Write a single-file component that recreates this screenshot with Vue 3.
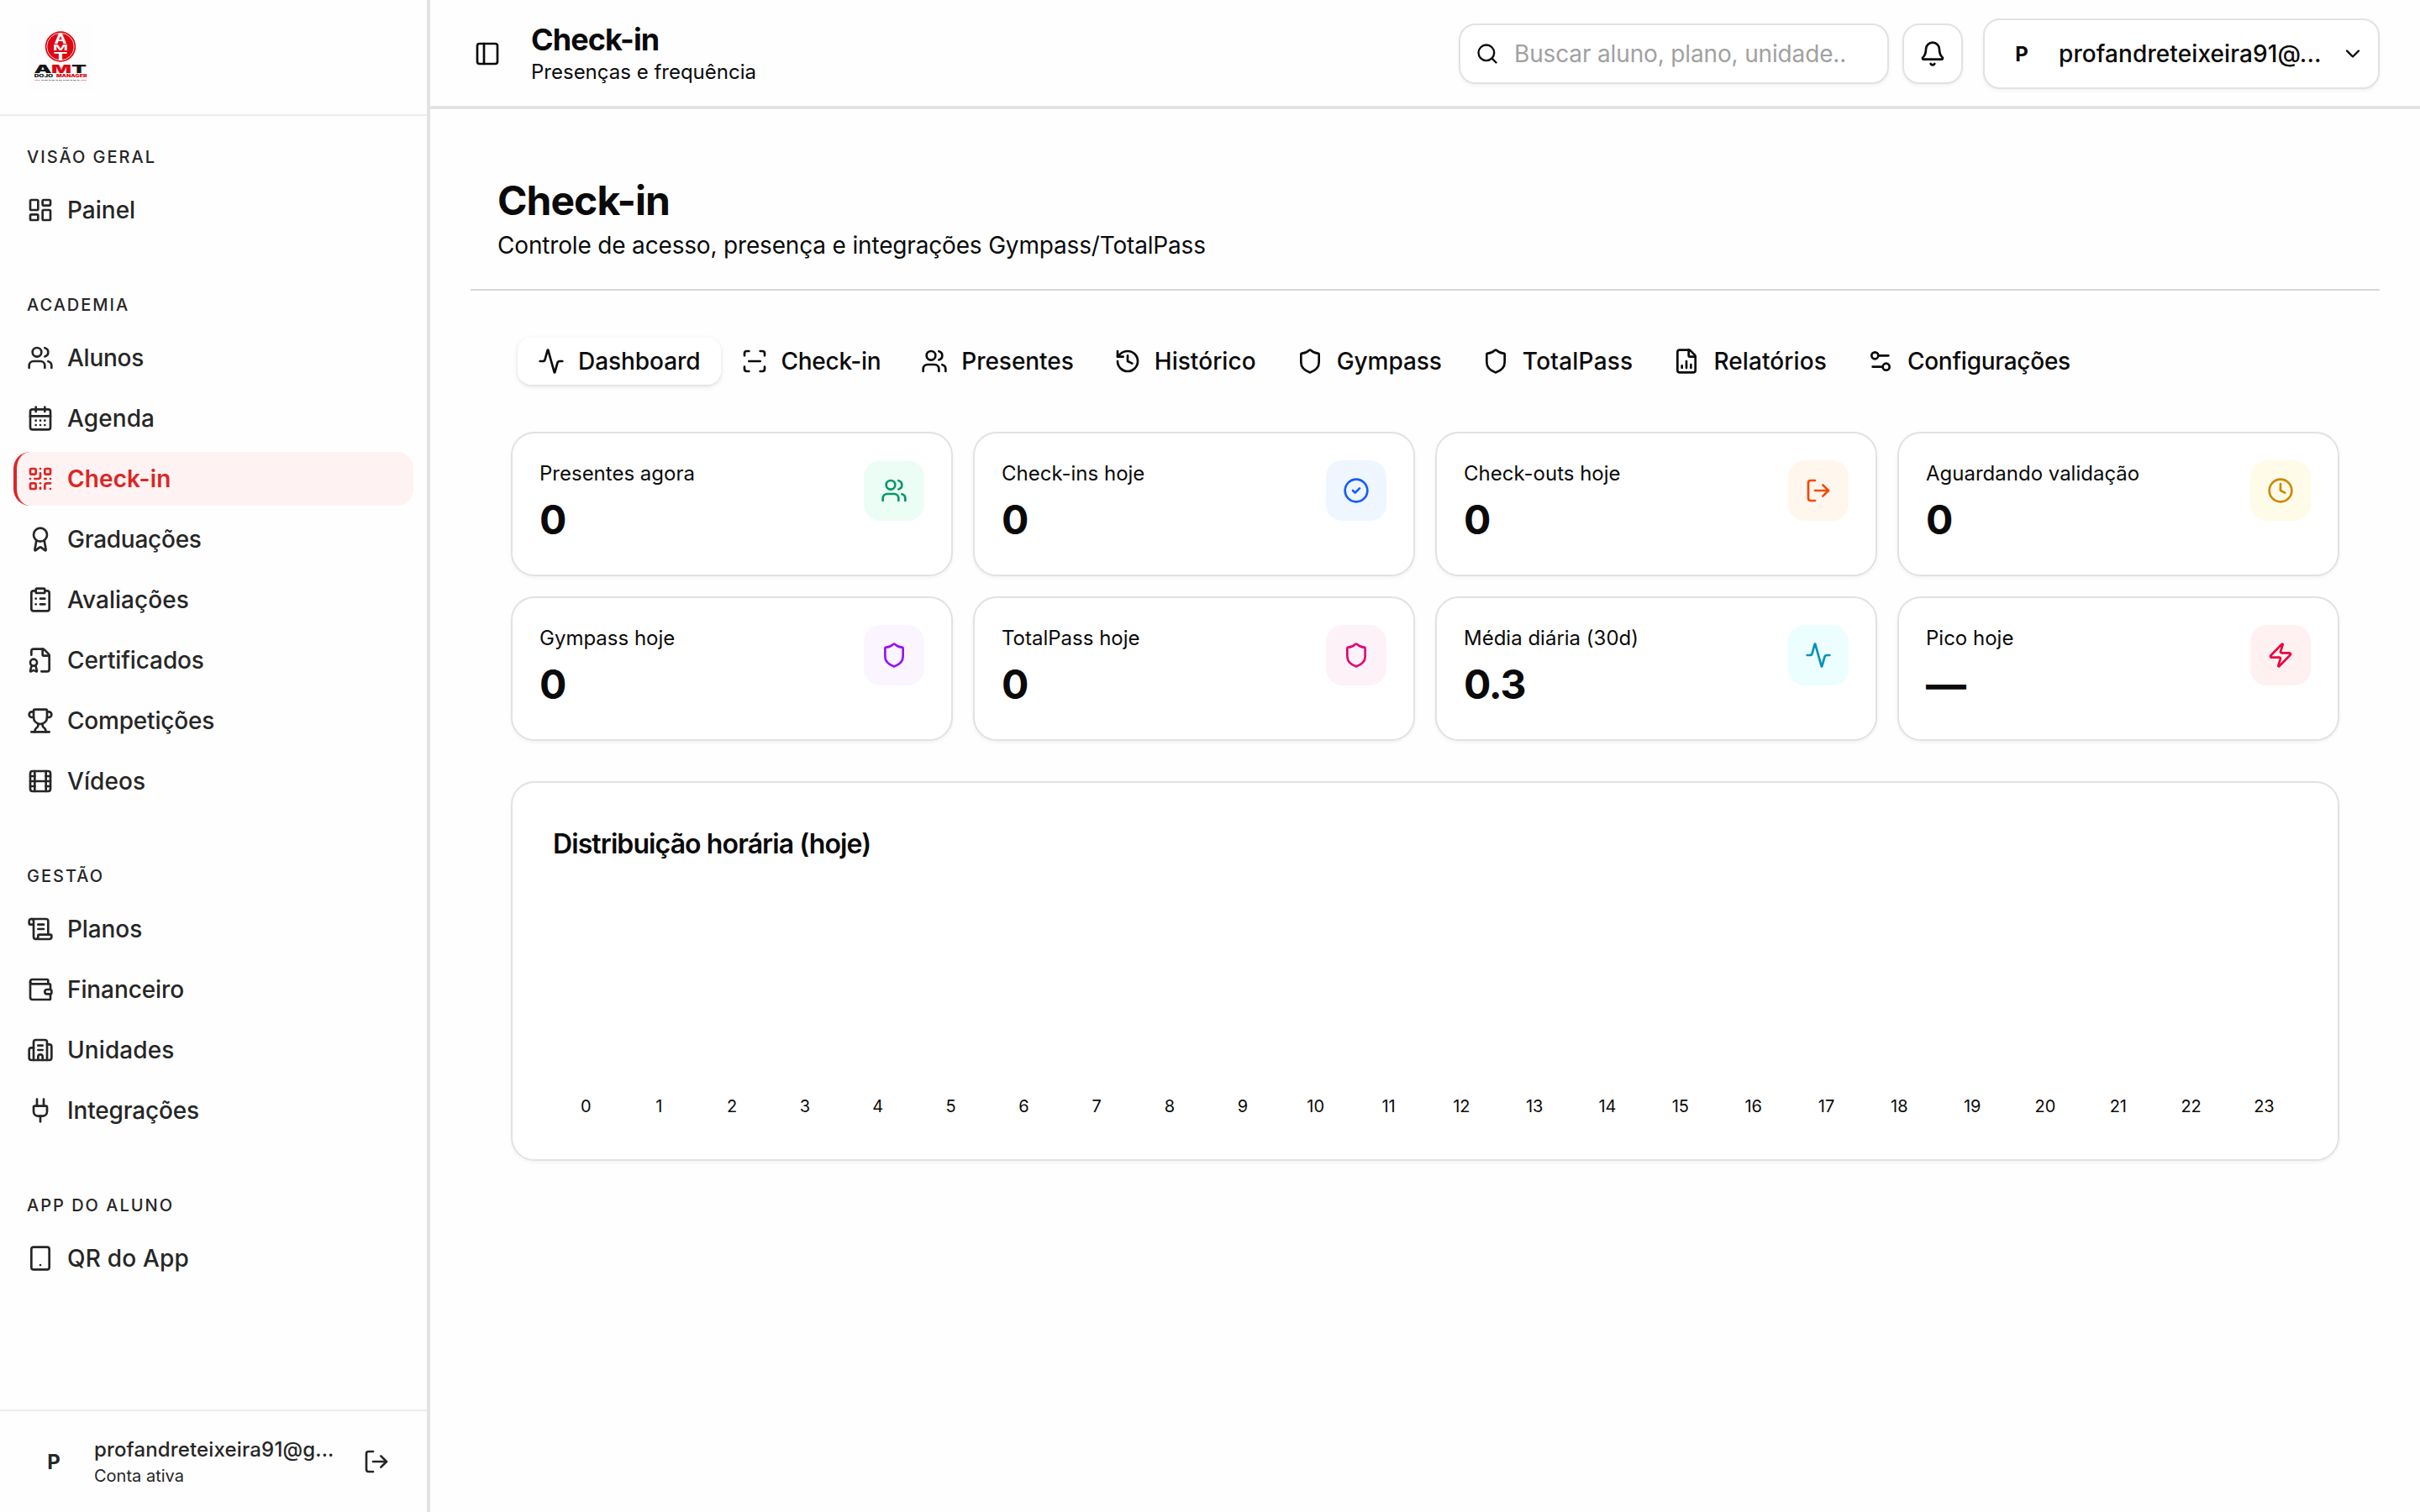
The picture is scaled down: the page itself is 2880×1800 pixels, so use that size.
<script setup>
import { ref } from 'vue';

// Icon shapes on a 24x24 grid
const icons = {
    dashboard: '<rect width="7" height="9" x="3" y="3" rx="1"/><rect width="7" height="5" x="14" y="3" rx="1"/><rect width="7" height="9" x="14" y="12" rx="1"/><rect width="7" height="5" x="3" y="16" rx="1"/>',
    users: '<path d="M16 21v-2a4 4 0 0 0-4-4H6a4 4 0 0 0-4 4v2"/><path d="M16 3.128a4 4 0 0 1 0 7.744"/><path d="M22 21v-2a4 4 0 0 0-3-3.87"/><circle cx="9" cy="7" r="4"/>',
    calendar: '<path d="M8 2v4"/><path d="M16 2v4"/><rect width="18" height="18" x="3" y="4" rx="2"/><path d="M3 10h18"/><path d="M8 14h.01"/><path d="M12 14h.01"/><path d="M16 14h.01"/><path d="M8 18h.01"/><path d="M12 18h.01"/><path d="M16 18h.01"/>',
    qr: '<rect width="5" height="5" x="3" y="3" rx="1"/><rect width="5" height="5" x="16" y="3" rx="1"/><rect width="5" height="5" x="3" y="16" rx="1"/><path d="M21 16h-3a2 2 0 0 0-2 2v3"/><path d="M21 21v.01"/><path d="M12 7v3a2 2 0 0 1-2 2H7"/><path d="M3 12h.01"/><path d="M12 3h.01"/><path d="M12 16v.01"/><path d="M16 12h1"/><path d="M21 12v.01"/><path d="M12 21v-1"/>',
    award: '<path d="m15.477 12.89 1.515 8.526a.5.5 0 0 1-.81.47l-3.58-2.687a1 1 0 0 0-1.197 0l-3.586 2.686a.5.5 0 0 1-.81-.469l1.514-8.526"/><circle cx="12" cy="8" r="6"/>',
    clipboard: '<rect width="8" height="4" x="8" y="2" rx="1" ry="1"/><path d="M16 4h2a2 2 0 0 1 2 2v14a2 2 0 0 1-2 2H6a2 2 0 0 1-2-2V6a2 2 0 0 1 2-2h2"/><path d="M12 11h4"/><path d="M12 16h4"/><path d="M8 11h.01"/><path d="M8 16h.01"/>',
    fileBadge: '<path d="M13 22h5a2 2 0 0 0 2-2V8a2.4 2.4 0 0 0-.706-1.706l-3.588-3.588A2.4 2.4 0 0 0 14 2H6a2 2 0 0 0-2 2v3.3"/><path d="M14 2v5a1 1 0 0 0 1 1h5"/><path d="m7.69 16.479 1.29 4.88a.5.5 0 0 1-.698.591l-1.843-.849a1 1 0 0 0-.879.001l-1.846.85a.5.5 0 0 1-.692-.593l1.29-4.88"/><circle cx="6" cy="14" r="3"/>',
    trophy: '<path d="M10 14.66v1.626a2 2 0 0 1-.976 1.696A5 5 0 0 0 7 21.978"/><path d="M14 14.66v1.626a2 2 0 0 0 .976 1.696A5 5 0 0 1 17 21.978"/><path d="M18 9h1.5a1 1 0 0 0 0-5H18"/><path d="M4 22h16"/><path d="M6 9a6 6 0 0 0 12 0V3a1 1 0 0 0-1-1H7a1 1 0 0 0-1 1z"/><path d="M6 9H4.5a1 1 0 0 1 0-5H6"/>',
    film: '<rect width="18" height="18" x="3" y="3" rx="2"/><path d="M7 3v18"/><path d="M3 7.5h4"/><path d="M3 12h18"/><path d="M3 16.5h4"/><path d="M17 3v18"/><path d="M17 7.5h4"/><path d="M17 16.5h4"/>',
    scroll: '<path d="M15 12h-5"/><path d="M15 8h-5"/><path d="M19 17V5a2 2 0 0 0-2-2H4"/><path d="M8 21h12a2 2 0 0 0 2-2v-1a1 1 0 0 0-1-1H11a1 1 0 0 0-1 1v1a2 2 0 1 1-4 0V5a2 2 0 1 0-4 0v2a1 1 0 0 0 1 1h3"/>',
    wallet: '<path d="M19 7V4a1 1 0 0 0-1-1H5a2 2 0 0 0 0 4h15a1 1 0 0 1 1 1v4h-3a2 2 0 0 0 0 4h3a1 1 0 0 0 1-1v-2a1 1 0 0 0-1-1"/><path d="M3 5v14a2 2 0 0 0 2 2h15a1 1 0 0 0 1-1v-4"/>',
    building: '<path d="M10 12h4"/><path d="M10 8h4"/><path d="M14 21v-3a2 2 0 0 0-4 0v3"/><path d="M6 10H4a2 2 0 0 0-2 2v7a2 2 0 0 0 2 2h16a2 2 0 0 0 2-2V9a2 2 0 0 0-2-2h-2"/><path d="M6 21V5a2 2 0 0 1 2-2h8a2 2 0 0 1 2 2v16"/>',
    plug: '<path d="M12 22v-5"/><path d="M15 8V2"/><path d="M17 8a1 1 0 0 1 1 1v4a4 4 0 0 1-4 4h-4a4 4 0 0 1-4-4V9a1 1 0 0 1 1-1z"/><path d="M9 8V2"/>',
    tablet: '<rect width="16" height="20" x="4" y="2" rx="2"/><path d="M12 18h.01"/>',
    logout: '<path d="m16 17 5-5-5-5"/><path d="M21 12H9"/><path d="M9 21H5a2 2 0 0 1-2-2V5a2 2 0 0 1 2-2h4"/>',
    panel: '<rect width="18" height="18" x="3" y="3" rx="2"/><path d="M9 3v18"/>',
    search: '<path d="m21 21-4.34-4.34"/><circle cx="11" cy="11" r="8"/>',
    bell: '<path d="M10.268 21a2 2 0 0 0 3.464 0"/><path d="M3.262 15.326A1 1 0 0 0 4 17h16a1 1 0 0 0 .74-1.673C19.41 13.956 18 12.499 18 8A6 6 0 0 0 6 8c0 4.499-1.411 5.956-2.738 7.326"/>',
    chevron: '<path d="m6 9 6 6 6-6"/>',
    activity: '<path d="M22 12h-2.48a2 2 0 0 0-1.93 1.46l-2.35 8.36a.25.25 0 0 1-.48 0L9.24 2.18a.25.25 0 0 0-.48 0l-2.35 8.36A2 2 0 0 1 4.49 12H2"/>',
    scan: '<path d="M3 7V5a2 2 0 0 1 2-2h2"/><path d="M17 3h2a2 2 0 0 1 2 2v2"/><path d="M21 17v2a2 2 0 0 1-2 2h-2"/><path d="M7 21H5a2 2 0 0 1-2-2v-2"/><path d="M7 12h10"/>',
    history: '<path d="M3 12a9 9 0 1 0 9-9 9.75 9.75 0 0 0-6.74 2.74L3 8"/><path d="M3 3v5h5"/><path d="M12 7v5l4 2"/>',
    shield: '<path d="M20 13c0 5-3.5 7.5-7.66 8.95a1 1 0 0 1-.67-.01C7.5 20.5 4 18 4 13V6a1 1 0 0 1 1-1c2 0 4.5-1.2 6.24-2.72a1.17 1.17 0 0 1 1.52 0C14.51 3.81 17 5 19 5a1 1 0 0 1 1 1z"/>',
    report: '<path d="M6 22a2 2 0 0 1-2-2V4a2 2 0 0 1 2-2h8a2.4 2.4 0 0 1 1.704.706l3.588 3.588A2.4 2.4 0 0 1 20 8v12a2 2 0 0 1-2 2z"/><path d="M14 2v5a1 1 0 0 0 1 1h5"/><path d="M8 18v-2"/><path d="M12 18v-6"/><path d="M16 18v-3"/>',
    settings: '<path d="M14 17H5"/><path d="M19 7h-9"/><circle cx="17" cy="17" r="3"/><circle cx="7" cy="7" r="3"/>',
    check: '<circle cx="12" cy="12" r="10"/><path d="m9 12 2 2 4-4"/>',
    clock: '<circle cx="12" cy="12" r="10"/><path d="M12 6v6l4 2"/>',
    zap: '<path d="M4 14a1 1 0 0 1-.78-1.63l9.9-10.2a.5.5 0 0 1 .86.46l-1.92 6.02A1 1 0 0 0 13 10h7a1 1 0 0 1 .78 1.63l-9.9 10.2a.5.5 0 0 1-.86-.46l1.92-6.02A1 1 0 0 0 11 14z"/>',
};

// tracking: letter spacing of a label, in px
const groups = [
    { title: 'Visão geral', items: [{ label: 'Painel', icon: 'dashboard', tracking: 0 }] },
    {
        title: 'Academia',
        items: [
            { label: 'Alunos', icon: 'users', tracking: -0.25 },
            { label: 'Agenda', icon: 'calendar', tracking: 0.1 },
            { label: 'Check-in', icon: 'qr', tracking: 0.1 },
            { label: 'Graduações', icon: 'award', tracking: -0.25 },
            { label: 'Avaliações', icon: 'clipboard', tracking: 0.05 },
            { label: 'Certificados', icon: 'fileBadge', tracking: -0.12 },
            { label: 'Competições', icon: 'trophy', tracking: -0.2 },
            { label: 'Vídeos', icon: 'film', tracking: 0.1 },
        ],
    },
    {
        title: 'Gestão',
        items: [
            { label: 'Planos', icon: 'scroll', tracking: -0.1 },
            { label: 'Financeiro', icon: 'wallet', tracking: -0.1 },
            { label: 'Unidades', icon: 'building', tracking: 0.1 },
            { label: 'Integrações', icon: 'plug', tracking: -0.17 },
        ],
    },
    { title: 'App do aluno', items: [{ label: 'QR do App', icon: 'tablet', tracking: 0.2 }] },
];

const tabs = [
    { label: 'Dashboard', icon: 'activity', tracking: -0.05 },
    { label: 'Check-in', icon: 'scan', tracking: -0.3 },
    { label: 'Presentes', icon: 'users', tracking: -0.05 },
    { label: 'Histórico', icon: 'history', tracking: 0.05 },
    { label: 'Gympass', icon: 'shield', tracking: -0.05 },
    { label: 'TotalPass', icon: 'shield', tracking: 0.22 },
    { label: 'Relatórios', icon: 'report', tracking: 0.1 },
    { label: 'Configurações', icon: 'settings', tracking: -0.27 },
];

const stats = [
    { label: 'Presentes agora', value: '0', icon: 'users', tone: 'emerald' },
    { label: 'Check-ins hoje', value: '0', icon: 'check', tone: 'blue' },
    { label: 'Check-outs hoje', value: '0', icon: 'logout', tone: 'orange' },
    { label: 'Aguardando validação', value: '0', icon: 'clock', tone: 'yellow' },
    { label: 'Gympass hoje', value: '0', icon: 'shield', tone: 'purple' },
    { label: 'TotalPass hoje', value: '0', icon: 'shield', tone: 'pink' },
    { label: 'Média diária (30d)', value: '0.3', icon: 'activity', tone: 'cyan' },
    { label: 'Pico hoje', value: '—', icon: 'zap', tone: 'rose' },
];

const hours = Array.from({ length: 24 }, (_, hour) => ({ hour, total: 0 }));

const activePage = ref('Check-in');
const activeTab = ref('Dashboard');
const search = ref('');
</script>

<template>
    <div class="app">
        <aside class="sidebar">
            <div class="brand">
                <svg class="logo" viewBox="0 0 80 80">
                    <rect width="80" height="80" fill="#fdfdfd" />
                    <circle cx="40" cy="27.5" r="18.2" fill="#dc0814" />
                    <circle cx="40" cy="27.5" r="16.2" fill="none" stroke="#fff" stroke-width="0.8" />
                    <g class="logo-seal" text-anchor="middle">
                        <text x="40" y="23.7" font-size="16" textLength="15" lengthAdjust="spacingAndGlyphs">A</text>
                        <text x="40" y="32" font-size="9.2" textLength="18" lengthAdjust="spacingAndGlyphs">M</text>
                        <text x="40" y="43.7" font-size="13.5" textLength="17" lengthAdjust="spacingAndGlyphs">T</text>
                    </g>
                    <g class="logo-name" font-size="13.3">
                        <text x="8.5" y="58.7" fill="#151515" textLength="21" lengthAdjust="spacingAndGlyphs">A</text>
                        <text x="29" y="58.7" fill="#dc0814" textLength="24" lengthAdjust="spacingAndGlyphs">M</text>
                        <text x="53" y="58.7" fill="#151515" textLength="18" lengthAdjust="spacingAndGlyphs">T</text>
                    </g>
                    <g class="logo-sub" font-size="4.2">
                        <text x="8.7" y="64" fill="#151515" textLength="22.5" lengthAdjust="spacingAndGlyphs">DOJO</text>
                        <text x="35" y="64" fill="#dc0814" textLength="36.5" lengthAdjust="spacingAndGlyphs">MANAGER</text>
                    </g>
                    <path d="M9 67.500h7M64 67.500h7" stroke="#e4777d" stroke-width="0.7" />
                    <path d="M17.500 67.500h46" stroke="#8a8a8a" stroke-width="1" stroke-dasharray="2.500 0.800 4 1.200" />
                </svg>
            </div>
            <nav class="nav">
                <div v-for="group in groups" :key="group.title" class="group">
                    <div class="group-title">{{ group.title }}</div>
                    <div class="group-items">
                        <a
                            v-for="item in group.items"
                            :key="item.label"
                            class="nav-item"
                            :class="{ active: item.label === activePage }"
                            @click="activePage = item.label"
                        >
                            <svg class="icon" viewBox="0 0 24 24" v-html="icons[item.icon]"></svg>
                            <span :style="{ letterSpacing: item.tracking + 'px' }">{{ item.label }}</span>
                        </a>
                    </div>
                </div>
            </nav>
            <div class="account">
                <span class="avatar">P</span>
                <div class="account-text">
                    <div class="account-mail">profandreteixeira91@g...</div>
                    <div class="account-status">Conta ativa</div>
                </div>
                <button class="logout">
                    <svg class="icon" viewBox="0 0 24 24" v-html="icons.logout"></svg>
                </button>
            </div>
        </aside>

        <div class="main">
            <header class="topbar">
                <svg class="icon" viewBox="0 0 24 24" v-html="icons.panel"></svg>
                <div class="topbar-title">
                    <h2>Check-in</h2>
                    <p>Presenças e frequência</p>
                </div>
                <label class="search">
                    <svg class="icon search-icon" viewBox="0 0 24 24" v-html="icons.search"></svg>
                    <input v-model="search" type="text" placeholder="Buscar aluno, plano, unidade.." />
                </label>
                <button class="bell">
                    <svg class="icon" viewBox="0 0 24 24" v-html="icons.bell"></svg>
                </button>
                <button class="user">
                    <span class="avatar">P</span>
                    <span class="user-mail">profandreteixeira91@...</span>
                    <svg class="icon user-chevron" viewBox="0 0 24 24" v-html="icons.chevron"></svg>
                </button>
            </header>

            <main class="content">
                <div class="page-head">
                    <h1>Check-in</h1>
                    <p>Controle de acesso, presença e integrações Gympass/TotalPass</p>
                </div>

                <div class="body">
                    <div class="tabs">
                        <button
                            v-for="tab in tabs"
                            :key="tab.label"
                            class="tab"
                            :class="{ active: tab.label === activeTab }"
                            @click="activeTab = tab.label"
                        >
                            <svg class="icon" viewBox="0 0 24 24" v-html="icons[tab.icon]"></svg>
                            <span :style="{ letterSpacing: tab.tracking + 'px' }">{{ tab.label }}</span>
                        </button>
                    </div>

                    <div class="stats">
                        <div v-for="stat in stats" :key="stat.label" class="card stat">
                            <div>
                                <div class="stat-label">{{ stat.label }}</div>
                                <div class="stat-value">{{ stat.value }}</div>
                            </div>
                            <div class="stat-icon" :class="stat.tone">
                                <svg class="icon" viewBox="0 0 24 24" v-html="icons[stat.icon]"></svg>
                            </div>
                        </div>
                    </div>

                    <section class="card chart">
                        <h3>Distribuição horária (hoje)</h3>
                        <div class="bars">
                            <div v-for="bar in hours" :key="bar.hour" class="bar-col">
                                <div class="bar" :style="{ height: bar.total + 'px' }"></div>
                                <span>{{ bar.hour }}</span>
                            </div>
                        </div>
                    </section>
                </div>
            </main>
        </div>
    </div>
</template>

<style>
body {
    margin: 0;
    background: #fefefe;
}
</style>

<style scoped>
* {
    box-sizing: border-box;
}

.app {
    display: flex;
    width: 2880px;
    height: 1800px;
    overflow: hidden;
    font-family: Inter, sans-serif;
    font-size: 28px;
    color: #0a0a0a;
    background: #fefefe;
}

h1,
h2,
h3,
p {
    margin: 0;
}

button {
    font: inherit;
    color: inherit;
    background: none;
    border: none;
    padding: 0;
    cursor: pointer;
}

.icon {
    width: 32px;
    height: 32px;
    flex-shrink: 0;
    fill: none;
    stroke: currentColor;
    stroke-width: 2;
    stroke-linecap: round;
    stroke-linejoin: round;
}

/* Sidebar */
.sidebar {
    display: flex;
    flex-direction: column;
    flex-shrink: 0;
    width: 512px;
    border-right: 4px solid #e2e2e2;
    color: #262626;
}

.brand {
    height: 138px;
    padding: 28px 32px;
    border-bottom: 2px solid #ededed;
}

.logo {
    display: block;
    width: 80px;
    height: 80px;
}

.logo-seal {
    fill: #fff;
    font-weight: 700;
}

.logo-name,
.logo-sub {
    font-weight: 900;
}

.nav {
    flex: 1;
    display: flex;
    flex-direction: column;
    gap: 16px;
}

.group {
    padding: 16px;
}

.group-title {
    height: 64px;
    padding: 1px 16px 0;
    line-height: 64px;
    font-size: 20px;
    font-weight: 500;
    letter-spacing: 2px;
    text-transform: uppercase;
}

.group-items {
    display: flex;
    flex-direction: column;
    gap: 8px;
}

.nav-item {
    display: flex;
    align-items: center;
    gap: 16px;
    height: 64px;
    padding: 0 16px 0 12px;
    border-left: 4px solid transparent;
    border-radius: 20px;
    font-weight: 500;
    cursor: pointer;
}

.nav-item.active {
    color: #dc2626;
    font-weight: 600;
    background: #fef2f2;
    border-left-color: #dc2626;
}

.account {
    display: flex;
    align-items: center;
    height: 122px;
    padding: 0 44px 0 32px;
    border-top: 2px solid #ededed;
}

.avatar {
    width: 64px;
    text-align: center;
    font-size: 24px;
    font-weight: 700;
    flex-shrink: 0;
}

.account-text {
    flex: 1;
    min-width: 0;
    margin: 1px 24px 0 16px;
    white-space: nowrap;
}

.account-mail {
    font-size: 24px;
    line-height: 32px;
    font-weight: 500;
    letter-spacing: 0.15px;
}

.account-status {
    font-size: 20px;
    line-height: 30px;
}

.logout {
    display: flex;
}

/* Top bar */
.main {
    flex: 1;
    min-width: 0;
}

.topbar {
    display: flex;
    align-items: center;
    height: 130px;
    padding: 2px 48px 0 52px;
    border-bottom: 4px solid #e0e3e6;
}

.topbar-title {
    flex: 1;
    margin-left: 36px;
}

.topbar-title h2 {
    margin-bottom: 2px;
    font-size: 36px;
    line-height: 42px;
    font-weight: 700;
    letter-spacing: -0.9px;
}

.topbar-title p {
    font-size: 24px;
    line-height: 32px;
}

.search,
.bell,
.user {
    display: flex;
    align-items: center;
    border: 2px solid #e2e2e2;
    border-radius: 20px;
    background: #fff;
    box-shadow: 0 2px 4px rgba(0, 0, 0, 0.05);
}

.search {
    width: 512px;
    height: 72px;
    padding: 0 20px 0 18px;
    gap: 18px;
}

.search-icon {
    width: 28px;
    height: 28px;
}

.search input {
    flex: 1;
    min-width: 0;
    padding: 0;
    border: none;
    outline: none;
    font: inherit;
    letter-spacing: -0.15px;
    background: transparent;
}

.search input::placeholder {
    color: #a1a1a1;
}

.bell {
    justify-content: center;
    width: 72px;
    height: 72px;
    margin: 0 24px 0 16px;
}

.user {
    width: 472px;
    height: 84px;
    padding: 0 16px 0 12px;
}

.user-mail {
    flex: 1;
    margin-left: 12px;
    white-space: nowrap;
    text-align: left;
    font-weight: 500;
    letter-spacing: 0.1px;
}

.user-chevron {
    width: 28px;
    height: 28px;
}

/* Page */
.content {
    padding: 48px 48px 0;
}

.page-head {
    height: 168px;
    padding: 29px 32px 0;
    border-bottom: 2px solid #d6d6d6;
}

.page-head h1 {
    font-size: 48px;
    line-height: 64px;
    font-weight: 700;
    letter-spacing: -0.96px;
}

.page-head p {
    margin-top: 1px;
    line-height: 40px;
    letter-spacing: -0.17px;
}

.body {
    padding: 48px 48px 0;
}

.tabs {
    display: flex;
    padding: 8px;
}

.tab {
    display: flex;
    align-items: center;
    gap: 16px;
    height: 56px;
    padding: 0 24px;
    border-radius: 16px;
    font-weight: 500;
}

.tab.active {
    background: #fff;
    box-shadow: 0 2px 6px rgba(0, 0, 0, 0.1), 0 2px 4px -2px rgba(0, 0, 0, 0.1);
}

.card {
    border: 2px solid #e2e2e2;
    border-radius: 28px;
    background: #fff;
    box-shadow: 0 2px 4px rgba(0, 0, 0, 0.05);
}

.stats {
    display: grid;
    grid-template-columns: repeat(4, 1fr);
    gap: 24px;
    margin-top: 48px;
}

.stat {
    display: flex;
    justify-content: space-between;
    height: 172px;
    padding: 32px;
}

.stat-label {
    font-size: 24px;
    line-height: 32px;
}

.stat-value {
    margin-top: 7px;
    font-size: 48px;
    line-height: 64px;
    font-weight: 700;
    letter-spacing: -1.2px;
}

.stat-icon {
    display: flex;
    align-items: center;
    justify-content: center;
    width: 72px;
    height: 72px;
    border-radius: 20px;
}

.emerald {
    color: #009966;
    background: #ecfdf5;
}

.blue {
    color: #155dfc;
    background: #eff6ff;
}

.orange {
    color: #f54900;
    background: #fff7ed;
}

.yellow {
    color: #d08700;
    background: #fefce8;
}

.purple {
    color: #9810fa;
    background: #faf5ff;
}

.pink {
    color: #e60076;
    background: #fdf2f8;
}

.cyan {
    color: #0092b8;
    background: #ecfeff;
}

.rose {
    color: #ec003f;
    background: #fff1f2;
}

.chart {
    height: 452px;
    margin-top: 48px;
    padding: 49px 48px 0;
}

.chart h3 {
    font-size: 32px;
    line-height: 48px;
    font-weight: 600;
    letter-spacing: -0.9px;
}

.bars {
    display: flex;
    align-items: flex-end;
    gap: 8px;
    height: 303px;
}

.bar-col {
    flex: 1;
    text-align: center;
    font-size: 20px;
    line-height: 30px;
}

.bar {
    border-radius: 8px 8px 0 0;
    background: #dc2626;
}
</style>
